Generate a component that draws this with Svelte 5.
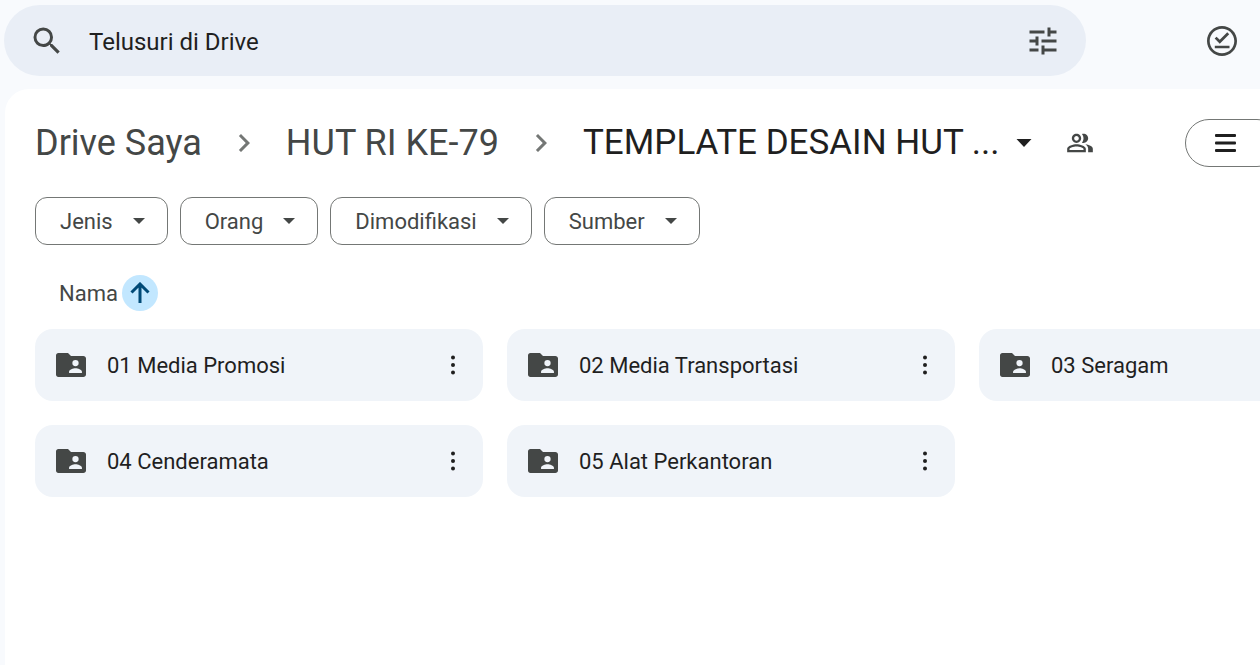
<script>
	/** @type {{ label: string, current?: boolean }[]} */
	const crumbs = [
		{ label: 'Drive Saya' },
		{ label: 'HUT RI KE-79' },
		{ label: 'TEMPLATE DESAIN HUT ...', current: true }
	];

	const filters = ['Jenis', 'Orang', 'Dimodifikasi', 'Sumber'];

	const folders = [
		'01 Media Promosi',
		'02 Media Transportasi',
		'03 Seragam',
		'04 Cenderamata',
		'05 Alat Perkantoran'
	];

	let query = $state('');
	let ascending = $state(true);

	const sorted = $derived(ascending ? folders : [...folders].reverse());
</script>

<div class="app">
	<header class="topbar">
		<form class="search" role="search" onsubmit={(e) => e.preventDefault()}>
			<button class="icon-button" type="submit" aria-label="Telusuri">
				<svg width="36" height="36" viewBox="0 0 24 24">
					<path d="M15.5 14h-.79l-.28-.27A6.471 6.471 0 0 0 16 9.5 6.5 6.5 0 1 0 9.5 16c1.61 0 3.09-.59 4.23-1.57l.27.28v.79l5 4.99L20.49 19l-4.99-5zm-6 0C7.01 14 5 11.99 5 9.5S7.01 5 9.5 5 14 7.01 14 9.5 11.99 14 9.5 14z" />
				</svg>
			</button>
			<input
				class="search__input"
				type="text"
				placeholder="Telusuri di Drive"
				aria-label="Telusuri di Drive"
				bind:value={query}
			/>
			<button class="icon-button" type="button" aria-label="Penelusuran lanjutan">
				<svg width="36" height="36" viewBox="0 0 24 24">
					<path d="M3 17v2h6v-2H3zM3 5v2h10V5H3zm10 16v-2h8v-2h-8v-2h-2v6h2zM7 9v2H3v2h4v2h2V9H7zm14 4v-2H11v2h10zm-6-4h2V7h4V5h-4V3h-2v6z" />
				</svg>
			</button>
		</form>
		<button class="icon-button" type="button" aria-label="Siap offline">
			<svg width="36" height="36" viewBox="0 0 24 24">
				<path d="M12 2C6.48 2 2 6.48 2 12s4.48 10 10 10 10-4.48 10-10S17.52 2 12 2zm0 18.2c-4.53 0-8.2-3.67-8.2-8.2S7.47 3.8 12 3.8s8.2 3.67 8.2 8.2-3.67 8.2-8.2 8.2zM7.2 15.1h9.8v1.7H7.2zM10.5 13.8 7.1 10.4l1.3-1.3 2.1 2.1 5-5 1.3 1.3z" />
			</svg>
		</button>
	</header>

	<main class="panel">
		<div class="heading">
			<nav class="crumbs" aria-label="Lokasi">
				{#each crumbs as crumb, i}
					{#if i > 0}
						<svg class="crumbs__chevron" width="36" height="36" viewBox="0 0 24 24">
							<path d="M10 6 8.59 7.41 13.17 12l-4.58 4.59L10 18l6-6z" />
						</svg>
					{/if}
					{#if crumb.current}
						<button class="crumb crumb--current" type="button" aria-haspopup="menu">
							{crumb.label}
							<svg width="16" height="8" viewBox="0 0 16 8"><path d="M0.5 0h15L8 8z" /></svg>
						</button>
					{:else}
						<a class="crumb" href="#folder">{crumb.label}</a>
					{/if}
				{/each}
				<button class="icon-button" type="button" aria-label="Kelola akses">
					<svg width="28" height="28" viewBox="0 0 24 24">
						<path d="M16.67 13.13C18.04 14.06 19 15.32 19 17v3h4v-3c0-2.18-3.57-3.47-6.33-3.87zM15 12c2.21 0 4-1.79 4-4s-1.79-4-4-4c-.47 0-.91.1-1.33.24C14.5 5.27 15 6.58 15 8s-.5 2.73-1.33 3.76c.42.14.86.24 1.33.24zM9 12c2.21 0 4-1.79 4-4s-1.79-4-4-4-4 1.79-4 4 1.79 4 4 4zm0-6c1.1 0 2 .9 2 2s-.9 2-2 2-2-.9-2-2 .9-2 2-2zM9 13c-2.67 0-8 1.34-8 4v3h16v-3c0-2.66-5.33-4-8-4zm6 5H3v-.99C3.2 16.29 6.3 15 9 15s5.8 1.29 6 2v1z" />
					</svg>
				</button>
			</nav>
			<button class="layout-toggle" type="button" aria-label="Tata letak daftar">
				<svg width="22" height="18" viewBox="0 0 22 18">
					<rect width="21" height="3" rx="1" />
					<rect y="7.5" width="21" height="3" rx="1" />
					<rect y="15" width="21" height="3" rx="1" />
				</svg>
			</button>
		</div>

		<div class="filters">
			{#each filters as filter}
				<button class="chip" type="button" aria-haspopup="menu">
					{filter}
					<svg width="12" height="6" viewBox="0 0 12 6"><path d="M0 0h12L6 6z" /></svg>
				</button>
			{/each}
		</div>

		<div class="sort">
			<span>Nama</span>
			<button
				class="sort__direction"
				class:sort__direction--down={!ascending}
				type="button"
				aria-label="Balikkan arah urutan"
				onclick={() => (ascending = !ascending)}
			>
				<svg width="20" height="22" viewBox="0 0 20 22">
					<path d="M10 21V2.5M1.5 10.5 10 2l8.5 8.5" />
				</svg>
			</button>
		</div>

		<ul class="folders">
			{#each sorted as folder (folder)}
				<li class="folder">
					<svg class="folder__icon" width="36" height="36" viewBox="0 0 24 24">
						<path d="M20.2 6H12l-2-2H3.6C2.7 4 2 4.7 2 5.6v12.8c0 .9.7 1.6 1.6 1.6h16.6c1 0 1.8-.7 1.8-1.6V7.6c0-.9-.8-1.6-1.8-1.6zM15 8.6a2.1 2.1 0 1 1 0 4.2 2.1 2.1 0 0 1 0-4.2zm4.3 8.7h-8.6v-.8c0-1.4 2.8-2.3 4.3-2.3s4.3.9 4.3 2.3z" />
					</svg>
					<span class="folder__name">{folder}</span>
					<button class="folder__more" type="button" aria-label="Tindakan lainnya untuk {folder}">
						<svg width="4" height="20" viewBox="0 0 4 20">
							<circle cx="2" cy="2.5" r="2" />
							<circle cx="2" cy="10" r="2" />
							<circle cx="2" cy="17.5" r="2" />
						</svg>
					</button>
				</li>
			{/each}
		</ul>
	</main>
</div>

<style>
	:global(body) {
		background: #f8fafd;
	}

	.app {
		display: flex;
		flex-direction: column;
		min-height: 100vh;
		overflow: hidden;
		color: #1f1f1f;
		font-family: Roboto, 'Liberation Sans', sans-serif;
	}

	button {
		flex: none;
		padding: 0;
		border: 0;
		background: none;
		color: inherit;
		font: inherit;
		cursor: pointer;
	}

	svg {
		display: block;
		flex: none;
		fill: currentColor;
	}

	.icon-button {
		display: flex;
		align-items: center;
		justify-content: center;
		width: 48px;
		height: 48px;
		border-radius: 50%;
		color: #444746;
	}

	.topbar {
		display: flex;
		align-items: center;
		gap: 112px;
		padding: 5px 14px 13px 4px;
	}

	.search {
		display: flex;
		flex: 1;
		align-items: center;
		height: 71px;
		padding: 0 19px;
		border-radius: 36px;
		background: #e9eef6;
	}

	.search__input {
		flex: 1;
		min-width: 0;
		padding: 2px 18px 0;
		border: 0;
		outline: none;
		background: none;
		color: #1f1f1f;
		font: inherit;
		font-size: 24px;
	}

	.search__input::placeholder {
		color: #1f1f1f;
		opacity: 1;
	}

	.panel {
		flex: 1;
		margin-left: 5px;
		padding: 30px 0 30px 30px;
		border-radius: 24px 0 0 0;
		background: #fff;
	}

	.heading {
		display: flex;
		align-items: center;
		justify-content: space-between;
		height: 48px;
	}

	.crumbs {
		display: flex;
		align-items: center;
		font-size: 36px;
		line-height: 48px;
		white-space: nowrap;
	}

	.crumbs__chevron {
		margin: 0 24px;
		color: #747775;
	}

	.crumb {
		color: #444746;
		text-decoration: none;
	}

	.crumb--current {
		display: flex;
		align-items: center;
		gap: 16px;
		margin-right: 24px;
		color: #1f1f1f;
		font-size: 35px;
	}

	/* the toggle runs past the right edge of the window */
	.layout-toggle {
		display: flex;
		align-items: center;
		width: 96px;
		height: 48px;
		margin-right: -21px;
		padding-left: 29px;
		border: 1px solid #747775;
		border-radius: 24px;
	}

	.filters {
		display: flex;
		gap: 12px;
		margin-top: 30px;
	}

	.chip {
		display: flex;
		align-items: center;
		gap: 20px;
		height: 48px;
		padding: 0 22px 0 24px;
		border: 1px solid #747775;
		border-radius: 12px;
		color: #444746;
		font-size: 22px;
	}

	.sort {
		display: flex;
		align-items: center;
		gap: 4px;
		margin-top: 30px;
		padding-left: 24px;
		color: #444746;
		font-size: 22px;
	}

	.sort__direction {
		display: flex;
		align-items: center;
		justify-content: center;
		width: 36px;
		height: 36px;
		border-radius: 50%;
		background: #c2e7ff;
		color: #004a77;
	}

	.sort__direction--down {
		transform: rotate(180deg);
	}

	.sort__direction path {
		fill: none;
		stroke: currentColor;
		stroke-width: 3;
	}

	.folders {
		display: grid;
		grid-template-columns: repeat(3, minmax(448px, 1fr));
		gap: 24px;
		margin: 18px 0 0;
		padding: 0;
		list-style: none;
	}

	.folder {
		display: flex;
		align-items: center;
		height: 72px;
		padding: 0 6px 0 18px;
		box-sizing: border-box;
		border-radius: 18px;
		background: #f0f4f9;
		font-size: 22px;
	}

	.folder__icon {
		color: #444746;
	}

	.folder__name {
		flex: 1;
		padding-left: 18px;
	}

	.folder__more {
		display: flex;
		align-items: center;
		justify-content: center;
		width: 48px;
		height: 48px;
	}
</style>
